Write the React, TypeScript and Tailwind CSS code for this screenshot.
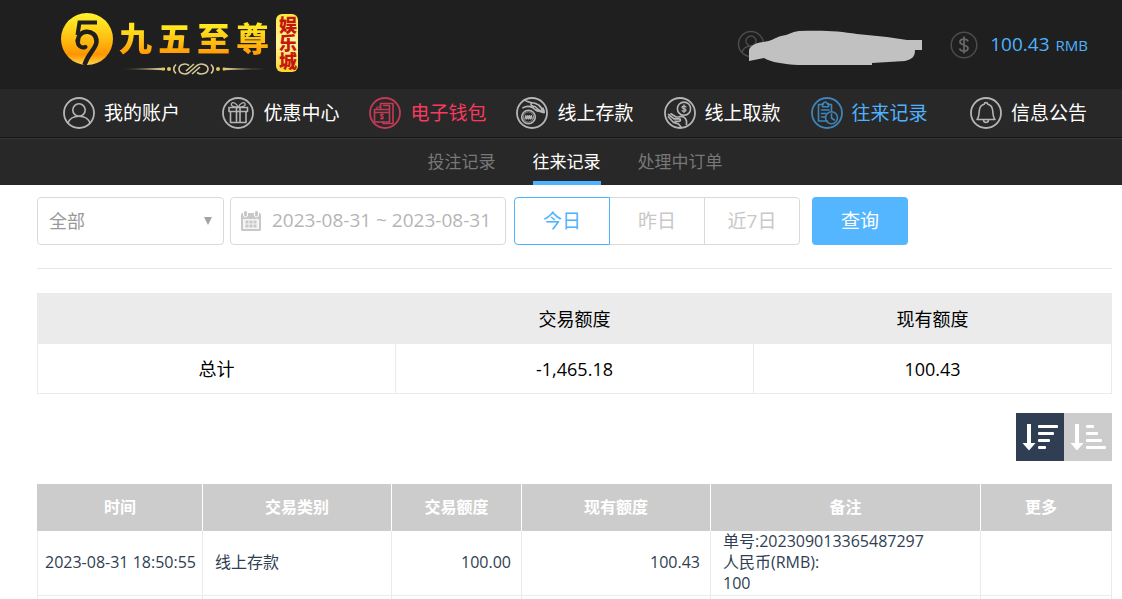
import { useState } from "react";
import type { ReactNode } from "react";

const navItems = [
  { label: "我的账户", icon: <UserIcon />, color: "text-white", iconColor: "text-[#b5b5b5]" },
  { label: "优惠中心", icon: <GiftIcon />, color: "text-white", iconColor: "text-[#b5b5b5]" },
  { label: "电子钱包", icon: <WalletIcon />, color: "text-[#f93a60]", iconColor: "text-[#c23a56]" },
  { label: "线上存款", icon: <DepositIcon />, color: "text-white", iconColor: "text-[#b5b5b5]" },
  { label: "线上取款", icon: <WithdrawIcon />, color: "text-white", iconColor: "text-[#b5b5b5]" },
  { label: "往来记录", icon: <RecordIcon />, color: "text-[#4eb2ff]", iconColor: "text-[#3e85ba]" },
  { label: "信息公告", icon: <BellIcon />, color: "text-white", iconColor: "text-[#b5b5b5]" },
];

const columns = ["时间", "交易类别", "交易额度", "现有额度", "备注", "更多"];

function CircleIcon({ children }: { children: ReactNode }) {
  return (
    <svg
      viewBox="0 0 32 32"
      className="size-8 shrink-0"
      fill="none"
      stroke="currentColor"
      strokeWidth="1.6"
      strokeLinecap="round"
      strokeLinejoin="round"
      aria-hidden="true"
    >
      <circle cx="16" cy="16" r="15" strokeWidth="1.8" />
      {children}
    </svg>
  );
}

function UserIcon() {
  return (
    <CircleIcon>
      <circle cx="16" cy="13" r="6.2" />
      <path d="M5 26.2C6.5 21.5 11 19.2 16 19.2s9.500 2.300 11 7" />
    </CircleIcon>
  );
}

function GiftIcon() {
  return (
    <CircleIcon>
      <path d="M7 10.500h18.500v4H7zM8.500 14.500V25.500h15.500V14.500M14.500 10.500v15M18 10.500v15" />
      <path d="M16 10C12 10 8.500 9.500 9.500 6.500 11 4.500 15 6.500 16 10zM16.500 10c4 0 7.500-.5 6.500-3.500-1.500-2-5.500 0-6.500 3.500z" strokeWidth="1.2" />
    </CircleIcon>
  );
}

function WalletIcon() {
  return (
    <CircleIcon>
      <path d="M5.500 12.500h15v12.500h-15zM5.500 15.500h15" />
      <path d="M11.500 12V6.500h12.500v20h-10V25M20.500 12V8.500h-6" />
      <path d="M8 12.500v-2.500h4" strokeWidth="1.200" />
      <path d="M14.500 17.500c-.6-.7-3-.7-3 .7s3 .9 3 2.400-2.400 1.400-3 .5M13 16.500v6" strokeWidth="1.100" />
    </CircleIcon>
  );
}

function DepositIcon() {
  return (
    <CircleIcon>
      <circle cx="12.500" cy="20" r="6.800" />
      <circle cx="12.500" cy="20" r="5.200" strokeWidth=".7" />
      <path d="M9 22l.8-3.500 1 3.500 1-3.500.8 3.500 1-3.500.8 3.500 1-3.500.8 3.500" strokeWidth="1.200" />
      <path d="M8.500 2.800c3 2.200 6.500 3 10.500 3.500l4.500 2.200 4.500 5.500M7 10.800c3-1.800 7-1.500 9.500-.3l4.500 3.300 5.500.7M15.500 6.200c-1.500 1.500.5 3.300 3.500 3.300l4 3.500c2 1.500 3.500.3 2.500-1.500L23 8.500" strokeWidth="1.600" />
      <path d="M20 13l8 2.500-1-4" strokeWidth="2" />
    </CircleIcon>
  );
}

function WithdrawIcon() {
  return (
    <CircleIcon>
      <circle cx="20" cy="11.700" r="6.600" />
      <path d="M22 10c-.8-1.200-4-1.100-4 .4s4 1 4 2.700-3.200 1.700-4 .4M20 8v7.500" strokeWidth="1.300" />
      <path d="M4.500 17.500l5.500 4.300h5c2 0 2 2.500 0 2.500h-4M7 16.800l5 3.200h3c3-1.500 6.500 0 7.500 4v3.500M4.500 20l5 5.500 5 1.500 2.500 3" strokeWidth="1.700" />
    </CircleIcon>
  );
}

function RecordIcon() {
  return (
    <CircleIcon>
      <path d="M12 7.500H7.500v16.500h9M17 7.500h3.500v6" />
      <path d="M11.500 6.500h1c.2-2 3.300-2 3.500 0h1.500v3.200h-6zM10.500 13h7.500M10.500 16.500h4.500M10.500 20h4" />
      <circle cx="20.500" cy="20.800" r="6" />
      <path d="M20.500 17v4l2.800 2" />
    </CircleIcon>
  );
}

function BellIcon() {
  return (
    <CircleIcon>
      <path d="M7 22.500c1.800-2 2-4.500 2.200-8 .2-4 2-6.500 5-7.200.2-2.300 3.400-2.300 3.600 0 3 .7 4.800 3.200 5 7.200.2 3.500.4 6 2.200 8zM13.500 23c.3 3.300 4.700 3.300 5 0" />
    </CircleIcon>
  );
}

function CalendarIcon() {
  return (
    <svg viewBox="0 0 22 22" className="size-[22px] shrink-0" aria-hidden="true">
      <rect x="1" y="3" width="20" height="18" rx="1.500" fill="#c8c8c8" />
      <rect x="3" y="9" width="16" height="10" fill="#f4f4f4" />
      <rect x="3.500" y="0.500" width="4" height="6.500" rx="2" fill="#c8c8c8" stroke="#fff" strokeWidth="1" />
      <rect x="14.500" y="0.500" width="4" height="6.500" rx="2" fill="#c8c8c8" stroke="#fff" strokeWidth="1" />
      <path d="M5.500 12h3M9.500 12h3M13.500 12h3M5.500 16h3M9.500 16h3M13.500 16h3" stroke="#c8c8c8" strokeWidth="3" />
    </svg>
  );
}

function SortIcon({ bars }: { bars: number[] }) {
  return (
    <svg viewBox="0 0 48 48" className="size-12" aria-hidden="true">
      <path d="M11 11h4v19h4.500L13 37.500 6.500 30H11z" fill="#fff" />
      {bars.map((width, i) => (
        <rect key={i} x="22" y={12 + i * 7} width={width} height="3" rx="1" fill="#fff" />
      ))}
    </svg>
  );
}

function Logo() {
  return (
    <a href="#" className="flex items-start" aria-label="九五至尊娱乐城">
      <svg viewBox="0 0 52 52" className="size-[52px]" aria-hidden="true">
        <defs>
          <linearGradient id="mark" x1="0" y1="0" x2="0" y2="1">
            <stop offset="0" stopColor="#fff52c" />
            <stop offset=".45" stopColor="#ffc414" />
            <stop offset=".8" stopColor="#ff9400" />
            <stop offset="1" stopColor="#ffd84e" />
          </linearGradient>
        </defs>
        <circle cx="26" cy="26" r="26" fill="url(#mark)" />
        <g fill="none" stroke="#1f1f1f">
          <path d="M36 9.500H18.500L16.500 22" strokeWidth="4" />
          <path d="M17 29C15.500 16 35.500 15 35.500 28.500c0 7-8 11-12 23.500" strokeWidth="4.500" />
          <path d="M16.500 27c0 6 3.500 8.500 8 7" strokeWidth="4" strokeLinecap="round" />
        </g>
      </svg>
      <div className="ml-1.5 flex flex-col items-center pt-1.5">
        <div className="flex gap-1.5 text-[33px] leading-[39px] font-black">
          {["九", "五", "至", "尊"].map((char) => (
            <span key={char} className="bg-linear-to-b from-[#ffe81f] from-20% to-[#ff9a06] to-90% bg-clip-text text-transparent">
              {char}
            </span>
          ))}
        </div>
        <svg viewBox="0 0 150 14" className="mt-1 h-3.5 w-[150px]" aria-hidden="true">
          <defs>
            <linearGradient id="rule" x1="0" x2="1">
              <stop offset="0" stopColor="#d9bd76" stopOpacity="0" />
              <stop offset="1" stopColor="#e6d4a0" />
            </linearGradient>
          </defs>
          <path d="M0 7l46-1.200v2.400z" fill="url(#rule)" />
          <path d="M0 7l46-1.200v2.400z" fill="url(#rule)" transform="translate(150 0) scale(-1 1)" />
          <g fill="#e4c658">
            <circle cx="44" cy="7" r="1.500" />
            <circle cx="50" cy="7" r="2" />
            <circle cx="99" cy="7" r="2" />
            <circle cx="105" cy="7" r="1.500" />
          </g>
          <path
            d="M57 2.500c-3 3-3 6 0 9M92 2.500c3 3 3 6 0 9M70 3.500c-4-3-10-1-10 3.500s6 6.500 10 3.500l8-7c4-3 11-1 11 3.500s-7 6.500-11 3.500M67 9l8-7M73 12l8-7"
            fill="none"
            stroke="#d6c895"
            strokeWidth="1.600"
          />
        </svg>
      </div>
      <span className="mt-px ml-[7px] flex h-[58px] w-[22px] items-center justify-center rounded-md bg-linear-to-b from-[#ffe83a] via-[#fff39a] to-[#ffd51f] text-lg leading-[22px] font-black text-[#c4160c] [writing-mode:vertical-rl]">
        娱乐城
      </span>
    </a>
  );
}

function NavLink({ item }: { item: (typeof navItems)[number] }) {
  return (
    <a href="#" className="flex items-center gap-[9px] whitespace-nowrap">
      <span className={item.iconColor}>{item.icon}</span>
      <span className={`text-[19px] leading-6 ${item.color}`}>{item.label}</span>
    </a>
  );
}

export default function App() {
  const [range, setRange] = useState("今日");
  const [descending, setDescending] = useState(true);

  return (
    <div className="bg-white font-['Open_Sans','Noto_Sans_CJK_SC',sans-serif] text-black">
      <header className="flex h-[89px] items-start justify-between bg-[#1f1f1f] pt-[13px] pr-[34px] pl-[61px]">
        <Logo />
        <div className="flex items-center gap-[27px] pt-3">
          <svg viewBox="0 0 186 40" className="h-10 w-[186px]" role="img" aria-label="用户">
            <g fill="none" stroke="#4c4c4c" strokeWidth="1.500">
              <circle cx="14" cy="19" r="12.500" />
              <circle cx="14" cy="16" r="5" />
              <path d="M5 28c1-5 5-7 9-7s8 2 9 7" />
            </g>
            <path
              d="M12 26c0-4 5-8 14-9 9-1 11-4 18-6 8-1 10-4 18-5 24-1 41 0 58 3l30 3 20 3h15v10h-7c0 7-3 9-10 11l-33 2v4l-24 1c-12 0-19-1-21-3-22 1-52 0-63-7l-15 3z"
              fill="#c1c1c1"
            />
          </svg>
          <div className="flex items-center gap-3">
            <svg viewBox="0 0 28 28" className="size-7" fill="none" stroke="#4c4c4c" strokeWidth="1.500" aria-hidden="true">
              <circle cx="14" cy="14" r="12.800" />
              <path d="M18 10.500c-1-3.500-8-3-8 .5s8 2.500 8 6.200-7 4-8.500.3M14 5.500v17" stroke="#666" strokeWidth="1.800" />
            </svg>
            <p className="flex items-baseline gap-1.5 pb-0.5 text-[#4eb2ff]">
              <span className="text-[19px] leading-6 font-medium">100.43</span>
              <span className="text-[15px] leading-6">RMB</span>
            </p>
          </div>
        </div>
      </header>

      <nav className="flex h-[49px] items-center justify-between border-b border-[#151515] bg-[#282828] pr-[35px] pl-[63px]">
        <NavLink item={navItems[0]} />
        <div className="flex gap-[30px]">
          {navItems.slice(1, 6).map((item) => (
            <NavLink key={item.label} item={item} />
          ))}
        </div>
        <NavLink item={navItems[6]} />
      </nav>

      <nav className="flex h-[47px] justify-center gap-[37px] border-t border-[#363636] bg-[#282828] pl-7 text-[17px] leading-[46px] text-[#777]">
        <a href="#">投注记录</a>
        <a href="#" aria-current="page" className="border-b-4 border-[#4eb2ff] text-white">
          往来记录
        </a>
        <a href="#">处理中订单</a>
      </nav>

      <main className="pt-3 pr-2.5 pl-[37px]">
        <form
          className="flex h-[72px] items-start border-b border-[#e6e6e6]"
          onSubmit={(e) => e.preventDefault()}
        >
          <div className="relative w-[187px]">
            <select
              aria-label="交易类别"
              className="h-12 w-full appearance-none rounded border border-[#d9d9d9] bg-white px-[11px] text-lg text-[#999]"
            >
              <option>全部</option>
            </select>
            <svg viewBox="0 0 8 8" className="pointer-events-none absolute top-5 right-3 size-2" aria-hidden="true">
              <path d="M0 0h8L4 8z" fill="#a3a3a3" />
            </svg>
          </div>
          <label className="ml-1.5 flex h-12 w-[276px] items-center gap-2.5 rounded border border-[#d9d9d9] pl-[9px]">
            <CalendarIcon />
            <input
              type="text"
              aria-label="日期"
              defaultValue="2023-08-31 ~ 2023-08-31"
              className="w-full min-w-0 pb-0.5 text-[19px] text-[#b5b5b5] outline-none"
            />
          </label>
          <div className="ml-2 flex text-[19px]">
            {["今日", "昨日", "近7日"].map((label) => (
              <button
                key={label}
                type="button"
                onClick={() => setRange(label)}
                className={`-mr-px h-12 w-24 border first:rounded-l last:mr-0 last:rounded-r ${
                  range === label ? "z-1 border-[#4eb2ff] text-[#4eb2ff]" : "border-[#d9d9d9] text-[#c8c8c8]"
                }`}
              >
                {label}
              </button>
            ))}
          </div>
          <button type="submit" className="ml-3 h-12 w-24 rounded bg-[#54b6ff] text-[19px] text-white">
            查询
          </button>
        </form>

        <table className="mt-6 w-full table-fixed border-collapse text-center text-lg">
          <thead>
            <tr className="h-[50px] bg-[#ebebeb]">
              <th className="border border-[#ebebeb]"></th>
              <th className="border border-[#ebebeb] font-normal">交易额度</th>
              <th className="border border-[#ebebeb] font-normal">现有额度</th>
            </tr>
          </thead>
          <tbody>
            <tr className="h-[50px]">
              <td className="border border-[#ebebeb]">总计</td>
              <td className="border border-[#ebebeb]">-1,465.18</td>
              <td className="border border-[#ebebeb]">100.43</td>
            </tr>
          </tbody>
        </table>

        <div className="mt-[19px] flex justify-end">
          <button
            type="button"
            aria-label="降序"
            onClick={() => setDescending(true)}
            className={descending ? "bg-[#2f3e52]" : "bg-[#ccc]"}
          >
            <SortIcon bars={[20, 16, 12, 8]} />
          </button>
          <button
            type="button"
            aria-label="升序"
            onClick={() => setDescending(false)}
            className={descending ? "bg-[#ccc]" : "bg-[#2f3e52]"}
          >
            <SortIcon bars={[8, 12, 16, 20]} />
          </button>
        </div>

        <table className="mt-[23px] w-full table-fixed border-collapse text-base leading-[21px] text-[#2f3e52]">
          <colgroup>
            <col className="w-[165px]" />
            <col className="w-[189px]" />
            <col className="w-[130px]" />
            <col className="w-[189px]" />
            <col />
            <col className="w-[131px]" />
          </colgroup>
          <thead>
            <tr className="h-[47px] bg-[#ccc] text-white">
              {columns.map((name) => (
                <th
                  key={name}
                  className="border-r border-white font-bold first:border-l first:border-l-[#ccc] last:border-r-[#ccc] last:pr-2.5"
                >
                  {name}
                </th>
              ))}
            </tr>
          </thead>
          <tbody className="[&_td]:border [&_td]:border-t-0 [&_td]:border-[#ebebeb]">
            <tr className="h-16">
              <td className="pl-[7px] whitespace-nowrap">2023-08-31 18:50:55</td>
              <td className="px-3">线上存款</td>
              <td className="px-2.5 text-right">100.00</td>
              <td className="px-2.5 text-right">100.43</td>
              <td className="px-3">
                单号:202309013365487297
                <br />
                人民币(RMB):
                <br />
                100
              </td>
              <td></td>
            </tr>
            <tr className="h-1">
              <td></td>
              <td></td>
              <td></td>
              <td></td>
              <td></td>
              <td></td>
            </tr>
          </tbody>
        </table>
      </main>
    </div>
  );
}
